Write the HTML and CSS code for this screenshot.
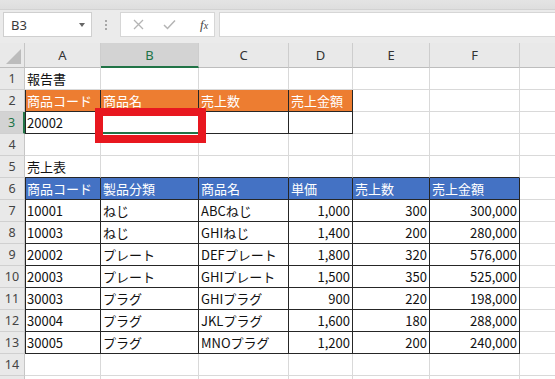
FILE: index.html
```html
<!DOCTYPE html>
<html lang="ja">
<head>
<meta charset="utf-8">
<link rel="stylesheet" href="styles.css">
</head>
<body>
<div class="app">
  <div class="edge"></div>
  <div class="fbar">
    <div class="namebox"><span>B3</span><span class="dd"></span></div>
    <div class="grip"><i></i><i></i><i></i></div>
    <div class="fbtns">
      <svg class="ic" width="11" height="11" viewBox="0 0 11 11"><path d="M1 1L10 10M10 1L1 10" stroke="#b4b4b4" stroke-width="1.3" fill="none"/></svg>
      <svg class="ic" width="13" height="11" viewBox="0 0 13 11"><path d="M1 6L4.5 9.5L12 1.5" stroke="#b4b4b4" stroke-width="1.5" fill="none"/></svg>
      <span class="fx">f<small>x</small></span>
    </div>
    <div class="finput"></div>
  </div>
  <div class="sheet">
    <div class="corner"><svg width="15" height="15" viewBox="0 0 15 15"><polygon points="15,0 15,15 0,15" fill="#bcbcbc"/></svg></div>
    <div class="ch">A</div><div class="ch csel">B</div><div class="ch">C</div><div class="ch">D</div><div class="ch">E</div><div class="ch">F</div><div class="ch"></div>

    <div class="rh">1</div><div class="c">報告書</div><div class="c"></div><div class="c"></div><div class="c"></div><div class="c"></div><div class="c"></div><div class="c"></div>

    <div class="rh">2</div><div class="c t tl or">商品コード</div><div class="c t or">商品名</div><div class="c t or">売上数</div><div class="c t or">売上金額</div><div class="c"></div><div class="c"></div><div class="c"></div>

    <div class="rh rsel">3</div><div class="c t tl">20002</div><div class="c t active"></div><div class="c t"></div><div class="c t"></div><div class="c"></div><div class="c"></div><div class="c"></div>

    <div class="rh">4</div><div class="c"></div><div class="c"></div><div class="c"></div><div class="c"></div><div class="c"></div><div class="c"></div><div class="c"></div>

    <div class="rh">5</div><div class="c tb">売上表</div><div class="c tb"></div><div class="c tb"></div><div class="c tb"></div><div class="c tb"></div><div class="c tb"></div><div class="c"></div>

    <div class="rh">6</div><div class="c t tl bl">商品コード</div><div class="c t bl">製品分類</div><div class="c t bl">商品名</div><div class="c t bl">単価</div><div class="c t bl">売上数</div><div class="c t bl">売上金額</div><div class="c"></div>

    <div class="rh">7</div><div class="c t tl">10001</div><div class="c t">ねじ</div><div class="c t">ABCねじ</div><div class="c t n">1,000</div><div class="c t n">300</div><div class="c t n">300,000</div><div class="c"></div>

    <div class="rh">8</div><div class="c t tl">10003</div><div class="c t">ねじ</div><div class="c t">GHIねじ</div><div class="c t n">1,400</div><div class="c t n">200</div><div class="c t n">280,000</div><div class="c"></div>

    <div class="rh">9</div><div class="c t tl">20002</div><div class="c t">プレート</div><div class="c t">DEFプレート</div><div class="c t n">1,800</div><div class="c t n">320</div><div class="c t n">576,000</div><div class="c"></div>

    <div class="rh">10</div><div class="c t tl">20003</div><div class="c t">プレート</div><div class="c t">GHIプレート</div><div class="c t n">1,500</div><div class="c t n">350</div><div class="c t n">525,000</div><div class="c"></div>

    <div class="rh">11</div><div class="c t tl">30003</div><div class="c t">プラグ</div><div class="c t">GHIプラグ</div><div class="c t n">900</div><div class="c t n">220</div><div class="c t n">198,000</div><div class="c"></div>

    <div class="rh">12</div><div class="c t tl">30004</div><div class="c t">プラグ</div><div class="c t">JKLプラグ</div><div class="c t n">1,600</div><div class="c t n">180</div><div class="c t n">288,000</div><div class="c"></div>

    <div class="rh">13</div><div class="c t tl">30005</div><div class="c t">プラグ</div><div class="c t">MNOプラグ</div><div class="c t n">1,200</div><div class="c t n">200</div><div class="c t n">240,000</div><div class="c"></div>

    <div class="rh">14</div><div class="c"></div><div class="c"></div><div class="c"></div><div class="c"></div><div class="c"></div><div class="c"></div><div class="c"></div>

    <div class="rh"></div><div class="c"></div><div class="c"></div><div class="c"></div><div class="c"></div><div class="c"></div><div class="c"></div><div class="c"></div>
  </div>
</div>
<div class="mark"></div>
</body>
</html>
```

FILE: styles.css
```css
* { box-sizing: border-box; margin: 0; padding: 0; }
html, body { width: 555px; height: 379px; overflow: hidden; background: #fff; }
body { position: relative; font-family: "Noto Sans CJK JP", "Noto Sans", sans-serif; }

.app { display: flex; flex-direction: column; width: 555px; height: 379px; overflow: hidden; }

.edge { height: 10px; flex: none; background: linear-gradient(#e4e4e4, #dedede); border-bottom: 1px solid #d2d2d2; }

.fbar { height: 33px; flex: none; display: flex; align-items: flex-start; padding: 2px 0 0 3px; background: #ebebeb; }

.namebox { width: 89px; height: 25px; background: #fff; border: 1px solid #cfcfcf; display: flex; align-items: center; justify-content: space-between; padding: 0 6px 0 7px; font-family: "Noto Sans", "Liberation Sans", sans-serif; font-size: 13px; color: #3a3a3a; }
.dd { width: 0; height: 0; border-left: 3.5px solid transparent; border-right: 3.5px solid transparent; border-top: 4px solid #666; }

.grip { width: 28px; height: 25px; display: flex; flex-direction: column; align-items: center; justify-content: center; gap: 2px; }
.grip i { display: block; width: 2px; height: 2px; background: #a8a8a8; }

.fbtns { width: 95px; height: 25px; background: #fff; border: 1px solid #d6d6d6; display: flex; align-items: center; padding-left: 12px; gap: 19px; }
.fx { font-family: "Liberation Serif", serif; font-style: italic; font-size: 13px; color: #444; margin-left: 5px; }
.fx small { font-size: 10px; }

.finput { flex: 1; height: 25px; margin-left: 4px; margin-right: -2px; background: #fff; border: 1px solid #d6d6d6; }

.sheet { flex: none; display: grid; grid-template-columns: 25px 76px 98px 90px 64px 77px 90px 90px; grid-template-rows: 25px; grid-auto-rows: 22px; width: 610px; }

.corner { background: #e9e9e9; border-right: 1px solid #c6c6c6; border-bottom: 1px solid #bdbdbd; display: flex; align-items: flex-end; justify-content: flex-end; padding: 0 3px 3px 0; }

.ch { background: #e9e9e9; border-right: 1px solid #cdcdcd; border-bottom: 1px solid #bdbdbd; font-family: "Noto Sans", "Liberation Sans", sans-serif; font-size: 13px; color: #333; text-align: center; line-height: 24px; }
.ch.csel { background: #d3d3d3; color: #217346; border-bottom: 2px solid #217346; }

.rh { background: #e9e9e9; border-right: 1px solid #c6c6c6; border-bottom: 1px solid #d0d0d0; font-family: "Noto Sans", "Liberation Sans", sans-serif; font-size: 12.5px; color: #444; text-align: center; line-height: 21px; }
.rh.rsel { background: #d3d3d3; color: #217346; border-right: 2px solid #217346; }

.c { border-right: 1px solid #d9d9d9; border-bottom: 1px solid #d9d9d9; font-size: 13px; line-height: 21px; padding: 0 2px 0 2px; white-space: nowrap; overflow: hidden; color: #111; }
.c.t { border-right-color: #262626; border-bottom-color: #262626; }
.c.tl { box-shadow: inset 1px 0 #262626; }
.c.tb { border-bottom-color: #262626; }
.c.n { text-align: right; padding-right: 2px; }
.c.or { background: #ed7d31; color: #fff; }
.c.bl { background: #4472c4; color: #fff; }
.c.active { border-bottom-color: #217346; box-shadow: inset 0 -1px #217346; }

.mark { position: absolute; left: 95px; top: 108px; width: 111px; height: 35px; border: 8px solid #e8171f; }
```
